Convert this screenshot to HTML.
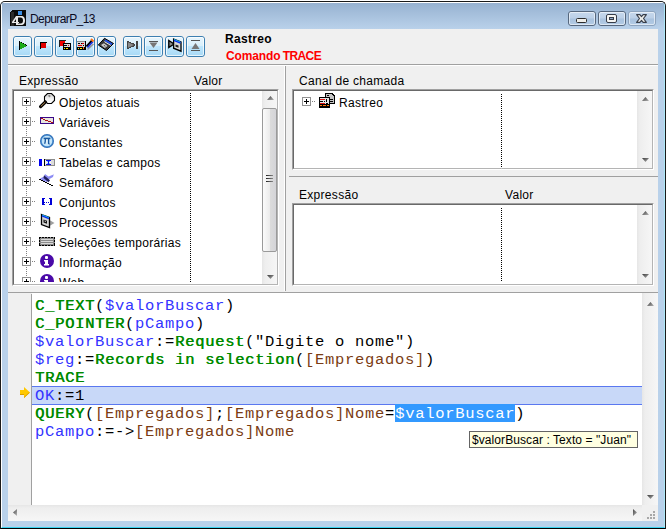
<!DOCTYPE html>
<html><head><meta charset="utf-8">
<style>
*{margin:0;padding:0;box-sizing:border-box}
html,body{width:666px;height:529px;overflow:hidden;background:#fff;font-family:"Liberation Sans",sans-serif;font-size:12px;color:#000}
.a{position:absolute}
svg{position:absolute;overflow:visible}
#win{position:absolute;left:0;top:1px;width:666px;height:528px;border:1px solid #1a1a1a;border-bottom-color:#000;border-radius:5px 5px 0 0;background:#b9d1ea;overflow:hidden}
#win:before{content:"";position:absolute;left:0;top:0;right:0;bottom:0;border-left:1px solid #fff;border-top:1px solid #fff;border-right:1px solid #aee8f8;border-bottom:1px solid #3ad3f0;border-radius:4px 4px 0 0}
#title{position:absolute;left:1px;top:1px;width:662px;height:26px;background:linear-gradient(#97b2d1,#b9d1ea)}
#client{position:absolute;left:8px;top:29px;width:650px;height:492px;background:#f0f0f0}
.tb{position:absolute;top:36px;width:19px;height:21px;border:1px solid #3c7fb1;border-radius:3px;background:linear-gradient(#e8f5fc 0%,#d9f0fc 45%,#bee6fd 50%,#a7d9f5 100%)}
.tb:before{content:"";position:absolute;left:0;top:0;right:0;bottom:0;border:1px solid rgba(255,255,255,.7);border-radius:2px}
.hdr,.row{position:absolute;font-size:12px;line-height:14px;letter-spacing:0.3px;white-space:nowrap}
.lb{position:absolute;background:#fff;border-top:1px solid #a0a0a0;border-left:1px solid #a0a0a0;border-right:1px solid #fff;border-bottom:1px solid #fff}
.lb>i{position:absolute;left:0;top:0;right:0;bottom:0;border-top:1px solid #696969;border-left:1px solid #696969;border-right:1px solid #b4b4b4;border-bottom:1px solid #b4b4b4}
.vs{position:absolute;background:linear-gradient(90deg,#e6e6e6 0,#eeeeee 3px,#f2f2f2 60%,#f6f6f6 100%)}
.hs{position:absolute;background:linear-gradient(#e6e6e6 0,#eeeeee 3px,#f2f2f2 60%,#f6f6f6 100%)}
.thumb{position:absolute;border:1px solid #9a9a9a;border-radius:2px;background:linear-gradient(90deg,#fbfbfb 0,#ececec 50%,#dcdcdc 51%,#d4d4d8 100%)}
.code{position:absolute;left:35px;font-family:"Liberation Mono",monospace;font-size:15.5px;letter-spacing:0.7px;line-height:18px;white-space:pre;height:18px}
.g{color:#008a00;text-shadow:0.55px 0 0 #008a00}
.b{color:#3333ff}
.r{color:#7a3c14}
.exp{position:absolute;width:9px;height:9px;border:1px solid #919191;background:#fff}
.exp:before{content:"";position:absolute;left:1px;top:3px;width:5px;height:1px;background:#000}
.exp:after{content:"";position:absolute;left:3px;top:1px;width:1px;height:5px;background:#000}
.dh{position:absolute;width:4px;height:1px;background:repeating-linear-gradient(90deg,#808080 0 1px,transparent 1px 2px)}
.dv{position:absolute;width:1px;background:repeating-linear-gradient(#808080 0 1px,transparent 1px 2px)}
.cold{position:absolute;width:1px;background:repeating-linear-gradient(#000 0 1px,transparent 1px 2px)}
.tbtn{position:absolute;top:11px;width:28px;height:15px;border:1px solid #56677d;border-radius:3px;background:linear-gradient(#c6d8ec 0,#bcd0e7 6px,#a9c2de 7px,#b3cbe5 100%)}
.tbtn:before{content:"";position:absolute;left:0;top:0;right:0;bottom:0;border:1px solid rgba(255,255,255,.55);border-radius:2px}
</style></head><body>
<div id="win"><div id="title"></div></div>
<!-- app icon -->
<svg style="left:10px;top:10px" width="16" height="16" viewBox="0 0 16 16" shape-rendering="crispEdges">
  <path d="M2 0H16V16H0V2Z" fill="#0a0a0a"/>
  <rect x="1" y="2" width="3" height="14" fill="#2a2a2a"/>
  <rect x="8" y="1" width="4" height="4" fill="#3a8ee6"/>
  <path d="M2 12L6 6H8V12H9V13H8V15H6V13H2Z M4 12H6V9Z" fill="#e8e8e8" fill-rule="evenodd" shape-rendering="auto"/>
  <path d="M8 6H11C14 6 15 8 15 10.5C15 13 14 15 11 15H8V13.5H10.5C12.3 13.5 13 12.5 13 10.5C13 8.5 12.3 7.5 10.5 7.5H8Z" fill="#e8e8e8" shape-rendering="auto"/>
</svg>
<div class="a" style="left:30px;top:12px;font-size:12px;line-height:14px;letter-spacing:-0.6px;color:#0a0a1e">DepurarP_13</div>
<!-- title buttons -->
<div class="tbtn" style="left:568px"></div>
<div class="tbtn" style="left:598px"></div>
<div class="tbtn" style="left:628px;border-color:#8da3bd"></div>
<div class="a" style="left:576px;top:18px;width:11px;height:5px;border:1px solid #2c2c2c;border-radius:1.5px;background:#eeeeea"></div>
<div class="a" style="left:606px;top:14px;width:11px;height:9px;border:1px solid #363c48;border-radius:2px;background:#f4f4f2"><div class="a" style="left:2px;top:2px;width:5px;height:3px;border:1px solid #363c48;background:#8ea6c4"></div></div>
<svg style="left:636px;top:14px" width="11" height="9" viewBox="0 0 11 9">
  <path d="M0.6 0.6H3.9L5.5 2.6L7.1 0.6H10.4L7.5 4.5L10.4 8.4H7.1L5.5 6.4L3.9 8.4H0.6L3.5 4.5Z" fill="#ecece8" stroke="#383e4a" stroke-width="1.1" stroke-linejoin="round"/>
</svg>


<div id="client"></div>
<div class="tb" style="left:13px"></div>
<div class="tb" style="left:34px"></div>
<div class="tb" style="left:55px"></div>
<div class="tb" style="left:76px"></div>
<div class="tb" style="left:97px"></div>
<div class="tb" style="left:123px"></div>
<div class="tb" style="left:144px"></div>
<div class="tb" style="left:165px"></div>
<div class="tb" style="left:186px"></div>
<!-- toolbar icons -->
<svg style="left:19px;top:41px" width="9" height="9" viewBox="0 0 9 9" shape-rendering="crispEdges">
  <path d="M1 1H2L8 4V5L2 8H1Z" fill="#1aaa1a"/>
  <rect x="0" y="0" width="1" height="9" fill="#000"/>
  <rect x="2" y="1" width="1" height="1" fill="#000"/><rect x="4" y="2" width="1" height="1" fill="#000"/><rect x="6" y="3" width="1" height="1" fill="#000"/><rect x="7" y="4" width="1" height="1" fill="#000"/>
</svg>
<svg style="left:40px;top:42px" width="7" height="7" viewBox="0 0 7 7" shape-rendering="crispEdges">
  <rect x="0" y="0" width="7" height="1" fill="#000"/><rect x="0" y="0" width="1" height="7" fill="#000"/>
  <rect x="1" y="1" width="5" height="5" fill="#e00000"/>
</svg>
<svg style="left:59px;top:40px" width="12" height="10" viewBox="0 0 12 10" shape-rendering="crispEdges">
  <rect x="0" y="0" width="7" height="1" fill="#222"/><rect x="0" y="0" width="1" height="7" fill="#222"/>
  <rect x="1" y="1" width="5" height="5" fill="#f00000"/>
  <rect x="4" y="3" width="8" height="7" fill="#000"/>
  <rect x="5" y="4" width="6" height="3" fill="#d8d8d8"/>
  <rect x="5" y="5" width="3" height="1" fill="#000"/><rect x="9" y="5" width="1" height="1" fill="#e00000"/>
  <rect x="5" y="8" width="1" height="1" fill="#ffe800"/><rect x="7" y="8" width="2" height="1" fill="#ffe800"/>
</svg>
<svg style="left:77px;top:38px" width="17" height="12" viewBox="0 0 17 12" shape-rendering="crispEdges">
  <rect x="0" y="3" width="9" height="9" fill="#000"/>
  <rect x="0" y="3" width="8" height="1" fill="#8a8a8a"/>
  <rect x="0" y="4" width="8" height="5" fill="#d8d8d8"/>
  <rect x="1" y="5" width="2" height="1" fill="#000"/><rect x="4" y="5" width="1" height="1" fill="#000"/><rect x="5" y="5" width="2" height="1" fill="#e00000"/>
  <rect x="1" y="7" width="4" height="1" fill="#e00000"/><rect x="6" y="7" width="1" height="1" fill="#000"/>
  <rect x="1" y="10" width="1" height="1" fill="#ffe800"/><rect x="3" y="10" width="2" height="1" fill="#ffe800"/>
  <rect x="6" y="9" width="1" height="2" fill="#ff7010"/>
  <path d="M9.5 8.5L15 2.5" stroke="#000" stroke-width="2" shape-rendering="auto"/>
  <path d="M10.5 9.5L16 3.5" stroke="#1a2ee0" stroke-width="1.8" shape-rendering="auto"/>
  <path d="M14 1L16.5 3.5" stroke="#ff7010" stroke-width="2" shape-rendering="auto"/>
  <path d="M10.5 11.5L16.5 6" stroke="#909090" stroke-width="1.3" shape-rendering="auto"/>
</svg>
<svg style="left:98px;top:38px" width="16" height="13" viewBox="0 0 16 13">
  <path d="M6.5 0.3L15.5 5.5L8.5 12.5L0.3 7Z" fill="#3a3a3a" stroke="#000" stroke-width="1"/>
  <path d="M7 2.2L14 6.3" stroke="#1e50f0" stroke-width="1.8"/>
  <path d="M6.4 3.6L12.8 7.4" stroke="#fff" stroke-width="0.9"/>
  <path d="M3 7L6 5.2L9.5 8L6.8 10Z" fill="#d0d0d0"/>
  <path d="M5.8 7.3L7.4 8.3" stroke="#444" stroke-width="1"/>
</svg>
<svg style="left:127px;top:41px" width="12" height="8" viewBox="0 0 12 8" shape-rendering="crispEdges">
  <path d="M0 0H1L8 3V5L1 8H0Z" fill="#444"/>
  <path d="M1 1.2L7 4L1 6.8Z" fill="#8a8a8a" shape-rendering="auto"/>
  <rect x="9" y="0" width="2" height="8" fill="#444"/>
</svg>
<svg style="left:149px;top:41px" width="9" height="10" viewBox="0 0 9 10" shape-rendering="crispEdges">
  <rect x="0" y="0" width="9" height="1" fill="#555"/>
  <path d="M0.5 1.5H8.5L4.5 7Z" fill="#777" shape-rendering="auto"/>
  <rect x="0" y="9" width="9" height="1" fill="#555"/>
</svg>
<svg style="left:168px;top:38px" width="14" height="14" viewBox="0 0 14 14">
  <path d="M0.8 2.5V9.5L6 6Z" fill="#8a8a8a" stroke="#000" stroke-width="1.4"/>
  <path d="M5.6 1L13 4V13.2L5.6 10.2Z" fill="#d8d8d8" stroke="#000" stroke-width="1.3"/>
  <path d="M6 2.2L12.5 4.8" stroke="#0a2af0" stroke-width="1.8"/>
  <path d="M6 1.4L12.5 4" stroke="#20d0f0" stroke-width="0.8"/>
  <path d="M7.5 6.5L10.5 7.5V9.8L7.5 8.8Z" fill="#222"/>
</svg>
<svg style="left:191px;top:40px" width="9" height="11" viewBox="0 0 9 11" shape-rendering="crispEdges">
  <rect x="0" y="0" width="9" height="1" fill="#555"/>
  <path d="M4.5 3L8.5 9H0.5Z" fill="#777" shape-rendering="auto"/>
  <rect x="0" y="10" width="9" height="1" fill="#555"/>
</svg>

<div class="a" style="left:225px;top:32px;font-weight:bold;font-size:12px;line-height:14px;letter-spacing:0.3px">Rastreo</div>
<div class="a" style="left:226px;top:49px;font-weight:bold;font-size:12px;line-height:14px;letter-spacing:-0.12px;color:#f00">Comando <span style="letter-spacing:-0.6px;margin-left:-1px">TRACE</span></div>
<div class="a" style="left:8px;top:64px;width:650px;height:1px;background:#a0a0a0"></div>
<div class="a" style="left:8px;top:65px;width:650px;height:1px;background:#fff"></div>
<div class="hdr" style="left:19px;top:74px">Expressão</div>
<div class="hdr" style="left:194px;top:74px">Valor</div>
<div class="lb" style="left:12px;top:89px;width:267px;height:197px"><i></i></div>
<div class="a" style="left:0;top:91px;width:262px;height:191px;overflow:hidden"><div class="a" style="left:0;top:-91px;width:262px;height:400px"><div class="dv" style="left:26px;top:107px;height:175px"></div>
<div class="exp" style="left:22px;top:97px"></div>
<div class="dh" style="left:32px;top:101px"></div>
<div class="row" style="left:59px;top:96px">Objetos atuais</div>
<div class="exp" style="left:22px;top:117px"></div>
<div class="dh" style="left:32px;top:121px"></div>
<div class="row" style="left:59px;top:116px">Variáveis</div>
<div class="exp" style="left:22px;top:137px"></div>
<div class="dh" style="left:32px;top:141px"></div>
<div class="row" style="left:59px;top:136px">Constantes</div>
<div class="exp" style="left:22px;top:157px"></div>
<div class="dh" style="left:32px;top:161px"></div>
<div class="row" style="left:59px;top:156px">Tabelas e campos</div>
<div class="exp" style="left:22px;top:177px"></div>
<div class="dh" style="left:32px;top:181px"></div>
<div class="row" style="left:59px;top:176px">Semáforo</div>
<div class="exp" style="left:22px;top:197px"></div>
<div class="dh" style="left:32px;top:201px"></div>
<div class="row" style="left:59px;top:196px">Conjuntos</div>
<div class="exp" style="left:22px;top:217px"></div>
<div class="dh" style="left:32px;top:221px"></div>
<div class="row" style="left:59px;top:216px">Processos</div>
<div class="exp" style="left:22px;top:237px"></div>
<div class="dh" style="left:32px;top:241px"></div>
<div class="row" style="left:59px;top:236px">Seleções temporárias</div>
<div class="exp" style="left:22px;top:257px"></div>
<div class="dh" style="left:32px;top:261px"></div>
<div class="row" style="left:59px;top:256px">Informação</div>
<div class="exp" style="left:22px;top:277px"></div>
<div class="dh" style="left:32px;top:281px"></div>
<div class="row" style="left:59px;top:276px">Web</div><!-- magnifier -->
<svg style="left:39px;top:93px" width="16" height="16" viewBox="0 0 16 16">
  <defs><linearGradient id="lg1" x1="0" y1="0" x2="0" y2="1"><stop offset="0" stop-color="#c8c8c8"/><stop offset="0.55" stop-color="#f4f4f4"/><stop offset="1" stop-color="#fff"/></linearGradient></defs>
  <path d="M8.5 0.5H12.5L15.5 3.5V7.5L12.5 10.5H8.5L5.5 7.5V3.5Z" fill="url(#lg1)" stroke="#000" stroke-width="1.1"/>
  <path d="M9 3L11 2.5M10 4L11.5 3" stroke="#666" stroke-width="0.8"/>
  <path d="M1.6 13.6L6.4 9" stroke="#000" stroke-width="3.2" stroke-linecap="round"/>
  <path d="M1.8 13.4L6.2 9.2" stroke="#c09050" stroke-width="1"/>
</svg>
<!-- variaveis -->
<svg style="left:40px;top:117px" width="14" height="7" viewBox="0 0 14 7" shape-rendering="crispEdges">
  <rect x="0" y="0" width="14" height="7" fill="#3a0888"/>
  <rect x="1" y="1" width="12" height="5" fill="#e6e6de"/>
  <rect x="1" y="1" width="2" height="1" fill="#b01010"/><rect x="3" y="2" width="2" height="1" fill="#b01010"/>
  <rect x="5" y="3" width="3" height="1" fill="#b01010"/><rect x="8" y="4" width="3" height="1" fill="#b01010"/>
  <rect x="11" y="5" width="2" height="1" fill="#b01010"/>
</svg>
<!-- pi -->
<svg style="left:40px;top:134px" width="14" height="14" viewBox="0 0 14 14">
  <defs><radialGradient id="rg1" cx="0.5" cy="0.5" r="0.5"><stop offset="0" stop-color="#e8f6fe"/><stop offset="0.7" stop-color="#bfe2f8"/><stop offset="0.8" stop-color="#4a8ed0"/><stop offset="1" stop-color="#1e5eaa"/></radialGradient></defs>
  <circle cx="7" cy="7" r="7" fill="url(#rg1)"/>
  <path d="M3.6 4.4H10.4" stroke="#1a5aa0" stroke-width="1.5"/>
  <path d="M5.4 4.4C5.4 6.5 5.2 8.5 4.6 9.8M8.6 4.4V9.2C8.6 9.7 9 9.9 9.6 9.6" stroke="#1a5aa0" stroke-width="1.4" fill="none"/>
</svg>
<!-- tabelas -->
<svg style="left:39px;top:159px" width="16" height="7" viewBox="0 0 16 7" shape-rendering="crispEdges">
  <rect x="0" y="0" width="3" height="7" fill="#0000f0"/>
  <rect x="5" y="0" width="11" height="7" fill="#8c8c8c"/>
  <rect x="5" y="0" width="1" height="7" fill="#000"/>
  <rect x="6" y="1" width="9" height="5" fill="#f0f0f0"/>
  <rect x="12" y="1" width="3" height="5" fill="#dcdcdc"/>
  <rect x="7" y="1" width="2" height="1" fill="#0a0ae8"/><rect x="10" y="1" width="2" height="1" fill="#0a0ae8"/>
  <rect x="7" y="5" width="2" height="1" fill="#0a0ae8"/><rect x="10" y="5" width="2" height="1" fill="#0a0ae8"/>
  <rect x="9" y="1" width="1" height="5" fill="#0a0ae8"/>
  <rect x="8" y="2" width="1" height="1" fill="#60c0ff"/><rect x="10" y="2" width="1" height="1" fill="#60c0ff"/>
  <rect x="8" y="4" width="1" height="1" fill="#60c0ff"/><rect x="10" y="4" width="1" height="1" fill="#60c0ff"/>
</svg>
<!-- semaforo -->
<svg style="left:39px;top:173px" width="16" height="13" viewBox="0 0 16 13">
  <path d="M1 5.5L5 3.5L6 1L9.5 3.5L14.5 1.5L15 0.5L14 4L9.5 6.5L8 9L4 8Z" fill="#8c8cf4"/>
  <path d="M5 2.2L11 7.2L9.5 9.2L4.5 5Z" fill="#1e1e5a"/>
  <g shape-rendering="crispEdges" fill="#000">
  <rect x="0" y="6" width="2" height="1"/><rect x="2" y="7" width="2" height="1"/><rect x="4" y="8" width="2" height="1"/>
  <rect x="6" y="9" width="2" height="1"/><rect x="8" y="10" width="2" height="1"/><rect x="10" y="11" width="2" height="1"/><rect x="12" y="12" width="2" height="1"/>
  </g>
</svg>
<!-- conjuntos -->
<svg style="left:42px;top:198px" width="10" height="7" viewBox="0 0 10 7" shape-rendering="crispEdges" fill="#0000d8">
  <rect x="0" y="0" width="2" height="7"/><rect x="2" y="0" width="1" height="1"/><rect x="2" y="6" width="1" height="1"/>
  <rect x="8" y="0" width="2" height="7"/><rect x="7" y="0" width="1" height="1"/><rect x="7" y="6" width="1" height="1"/>
  <rect x="2" y="4" width="1" height="1"/><rect x="4" y="4" width="1" height="1"/><rect x="6" y="4" width="1" height="1"/>
</svg>
<!-- processos -->
<svg style="left:40px;top:213px" width="16" height="16" viewBox="0 0 16 16">
  <path d="M9.5 7L14.5 10L9.5 13Z" fill="#a0a0a0"/>
  <path d="M1.5 1.5L9.5 4.5V14.5L1.5 11.5Z" fill="#d4d4d4" stroke="#000" stroke-width="1.3"/>
  <path d="M2 2.6L9 5.3" stroke="#0a2af0" stroke-width="1.8"/>
  <path d="M2 1.8L9 4.5" stroke="#20d0f0" stroke-width="0.8"/>
  <path d="M3.5 6.5L7 7.8V10.8L3.5 9.5Z" fill="#111"/>
  <path d="M4.5 8L6 8.6" stroke="#ddd" stroke-width="0.8"/>
</svg>
<!-- selecoes -->
<svg style="left:39px;top:237px" width="16" height="9" viewBox="0 0 16 9" shape-rendering="crispEdges">
  <rect x="0" y="0" width="16" height="9" fill="#8a8a8a"/>
  <rect x="2" y="2" width="12" height="1" fill="#d8d8d8"/><rect x="2" y="4" width="12" height="1" fill="#d8d8d8"/><rect x="2" y="6" width="12" height="1" fill="#d8d8d8"/>
  <path d="M0 0.5H16M0 8.5H16" stroke="#000" stroke-dasharray="2 1"/>
  <path d="M0.5 0V9M15.5 0V9" stroke="#000" stroke-dasharray="2 1"/>
</svg>
<!-- info -->
<svg style="left:40px;top:254px" width="14" height="14" viewBox="0 0 14 14">
  <circle cx="7" cy="7" r="7" fill="#4a0aa8"/>
  <rect x="5" y="2" width="3" height="3" rx="1" fill="#fff"/>
  <path d="M4 6H8V10H9V11.5H4V10H5V7.5H4Z" fill="#fff"/>
</svg>
<!-- web -->
<svg style="left:40px;top:274px" width="14" height="14" viewBox="0 0 14 14">
  <circle cx="7" cy="7" r="7" fill="#4a0aa8"/>
  <rect x="5" y="2" width="3" height="3" rx="1" fill="#fff"/>
  <path d="M4 6H8V10H9V11.5H4V10H5V7.5H4Z" fill="#fff"/>
</svg>

</div></div>
<div class="cold" style="left:190px;top:93px;height:189px"></div>
<div class="vs" style="left:262px;top:91px;width:15px;height:193px"></div>
<svg style="left:267px;top:96px" width="7" height="4" viewBox="0 0 7 4"><defs><linearGradient id="au267_96" x1="0" y1="0" x2="1" y2="1"><stop offset="0" stop-color="#3a3a3a"/><stop offset="1" stop-color="#b4b4b4"/></linearGradient></defs><path d="M0 4L3.5 0L7 4Z" fill="url(#au267_96)"/></svg>
<div class="thumb" style="left:262px;top:108px;width:15px;height:144px"></div>
<div class="a" style="left:266px;top:175px;width:7px;height:1px;background:linear-gradient(90deg,#222,#888)"></div>
<div class="a" style="left:266px;top:178px;width:7px;height:1px;background:linear-gradient(90deg,#222,#888)"></div>
<div class="a" style="left:266px;top:181px;width:7px;height:1px;background:linear-gradient(90deg,#222,#888)"></div>
<svg style="left:267px;top:275px" width="7" height="4" viewBox="0 0 7 4"><defs><linearGradient id="ad267_275" x1="0" y1="0" x2="1" y2="1"><stop offset="0" stop-color="#3a3a3a"/><stop offset="1" stop-color="#b4b4b4"/></linearGradient></defs><path d="M0 0L7 0L3.5 4Z" fill="url(#ad267_275)"/></svg>
<div class="a" style="left:284px;top:66px;width:1px;height:225px;background:#fff"></div>
<div class="a" style="left:285px;top:66px;width:1px;height:225px;background:#a0a0a0"></div>
<div class="hdr" style="left:299px;top:74px">Canal de chamada</div>
<div class="lb" style="left:292px;top:89px;width:362px;height:81px"><i></i></div>
<div class="cold" style="left:501px;top:94px;height:73px"></div>
<div class="vs" style="left:637px;top:91px;width:15px;height:77px"></div>
<svg style="left:642px;top:97px" width="7" height="4" viewBox="0 0 7 4"><defs><linearGradient id="au642_97" x1="0" y1="0" x2="1" y2="1"><stop offset="0" stop-color="#3a3a3a"/><stop offset="1" stop-color="#b4b4b4"/></linearGradient></defs><path d="M0 4L3.5 0L7 4Z" fill="url(#au642_97)"/></svg>
<svg style="left:642px;top:158px" width="7" height="4" viewBox="0 0 7 4"><defs><linearGradient id="ad642_158" x1="0" y1="0" x2="1" y2="1"><stop offset="0" stop-color="#3a3a3a"/><stop offset="1" stop-color="#b4b4b4"/></linearGradient></defs><path d="M0 0L7 0L3.5 4Z" fill="url(#ad642_158)"/></svg>
<div class="exp" style="left:302px;top:97px"></div>
<div class="dh" style="left:312px;top:101px"></div>
<svg style="left:319px;top:93px" width="16" height="15" viewBox="0 0 16 15" shape-rendering="crispEdges">
  <path d="M6 0H13L16 3V11H6Z" fill="#000"/>
  <path d="M7 1H12L15 4V10H7Z" fill="#c4c4c4"/>
  <rect x="8" y="2" width="2" height="1" fill="#000"/>
  <rect x="11" y="6" width="3" height="1" fill="#000"/><rect x="11" y="8" width="3" height="1" fill="#000"/>
  <rect x="0" y="4" width="11" height="11" fill="#000"/>
  <rect x="1" y="5" width="9" height="6" fill="#e4e4e4"/>
  <rect x="1" y="6" width="5" height="1" fill="#e01010"/><rect x="1" y="10" width="5" height="1" fill="#e01010"/>
  <rect x="1" y="8" width="3" height="1" fill="#000"/><rect x="5" y="8" width="1" height="1" fill="#000"/>
  <rect x="7" y="6" width="1" height="3" fill="#000"/><rect x="7" y="10" width="2" height="1" fill="#000"/>
  <rect x="1" y="12" width="2" height="1" fill="#ff7a10"/><rect x="4" y="12" width="3" height="1" fill="#ff7a10"/><rect x="8" y="12" width="2" height="1" fill="#ff7a10"/>
</svg>

<div class="row" style="left:339px;top:96px">Rastreo</div>
<div class="a" style="left:289px;top:176px;width:369px;height:1px;background:#a0a0a0"></div>
<div class="hdr" style="left:299px;top:188px">Expressão</div>
<div class="hdr" style="left:505px;top:188px">Valor</div>
<div class="lb" style="left:292px;top:203px;width:362px;height:83px"><i></i></div>
<div class="cold" style="left:501px;top:208px;height:74px"></div>
<div class="vs" style="left:637px;top:205px;width:15px;height:79px"></div>
<svg style="left:642px;top:211px" width="7" height="4" viewBox="0 0 7 4"><defs><linearGradient id="au642_211" x1="0" y1="0" x2="1" y2="1"><stop offset="0" stop-color="#3a3a3a"/><stop offset="1" stop-color="#b4b4b4"/></linearGradient></defs><path d="M0 4L3.5 0L7 4Z" fill="url(#au642_211)"/></svg>
<svg style="left:642px;top:274px" width="7" height="4" viewBox="0 0 7 4"><defs><linearGradient id="ad642_274" x1="0" y1="0" x2="1" y2="1"><stop offset="0" stop-color="#3a3a3a"/><stop offset="1" stop-color="#b4b4b4"/></linearGradient></defs><path d="M0 0L7 0L3.5 4Z" fill="url(#ad642_274)"/></svg>
<div class="a" style="left:8px;top:292px;width:650px;height:1px;background:#a0a0a0"></div>
<div class="a" style="left:31px;top:294px;width:1px;height:211px;background:#a0a0a0"></div>
<div class="a" style="left:32px;top:293px;width:610px;height:212px;background:#fff"></div>
<div class="a" style="left:32px;top:386px;width:610px;height:19px;background:#c8d8f8;border-top:1px solid #5a78f0;border-bottom:1px solid #5a78f0"></div>
<div class="a" style="left:395px;top:404px;width:120px;height:18px;background:#3399ff"></div>
<div class="vs" style="left:642px;top:293px;width:16px;height:212px"></div>
<svg style="left:647px;top:302px" width="7" height="4" viewBox="0 0 7 4"><defs><linearGradient id="au647_302" x1="0" y1="0" x2="1" y2="1"><stop offset="0" stop-color="#3a3a3a"/><stop offset="1" stop-color="#b4b4b4"/></linearGradient></defs><path d="M0 4L3.5 0L7 4Z" fill="url(#au647_302)"/></svg>
<svg style="left:647px;top:495px" width="7" height="4" viewBox="0 0 7 4"><defs><linearGradient id="ad647_495" x1="0" y1="0" x2="1" y2="1"><stop offset="0" stop-color="#3a3a3a"/><stop offset="1" stop-color="#b4b4b4"/></linearGradient></defs><path d="M0 0L7 0L3.5 4Z" fill="url(#ad647_495)"/></svg>
<div class="hs" style="left:8px;top:505px;width:634px;height:16px"></div>
<svg style="left:13px;top:509px" width="4" height="7" viewBox="0 0 4 7"><defs><linearGradient id="al13_509" x1="0" y1="0" x2="1" y2="1"><stop offset="0" stop-color="#444"/><stop offset="1" stop-color="#bbb"/></linearGradient></defs><path d="M4 0V7L0 3.5Z" fill="url(#al13_509)"/></svg>
<svg style="left:633px;top:509px" width="4" height="7" viewBox="0 0 4 7"><defs><linearGradient id="ar633_509" x1="0" y1="0" x2="1" y2="1"><stop offset="0" stop-color="#444"/><stop offset="1" stop-color="#bbb"/></linearGradient></defs><path d="M0 0V7L4 3.5Z" fill="url(#ar633_509)"/></svg>
<div class="a" style="left:653px;top:511px;width:2px;height:2px;background:#a8a8a8"></div>
<div class="a" style="left:650px;top:514px;width:2px;height:2px;background:#a8a8a8"></div>
<div class="a" style="left:653px;top:514px;width:2px;height:2px;background:#a8a8a8"></div>
<div class="a" style="left:647px;top:517px;width:2px;height:2px;background:#a8a8a8"></div>
<div class="a" style="left:650px;top:517px;width:2px;height:2px;background:#a8a8a8"></div>
<div class="a" style="left:653px;top:517px;width:2px;height:2px;background:#a8a8a8"></div>
<div class="code" style="top:297px"><span class="g">C_TEXT</span>(<span class="b">$valorBuscar</span>)</div>
<div class="code" style="top:315px"><span class="g">C_POINTER</span>(<span class="b">pCampo</span>)</div>
<div class="code" style="top:333px"><span class="b">$valorBuscar</span>:=<span class="g">Request</span>("Digite o nome")</div>
<div class="code" style="top:351px"><span class="b">$reg</span>:=<span class="g">Records in selection</span>(<span class="r">[Empregados]</span>)</div>
<div class="code" style="top:369px"><span class="g">TRACE</span></div>
<div class="code" style="top:387px"><span class="b">OK</span>:=1</div>
<div class="code" style="top:405px"><span class="g">QUERY</span>(<span class="r">[Empregados]</span>;<span class="r">[Empregados]Nome</span>=<span style="color:#fff">$valorBuscar</span>)</div>
<div class="code" style="top:423px"><span class="b">pCampo</span>:=-&gt;<span class="r">[Empregados]Nome</span></div>
<svg style="left:20px;top:387px" width="11" height="11" viewBox="0 0 11 11"><path d="M0 3H4V0L10 5.5L4 11V8H0Z" fill="#ffc800"/><path d="M0 7H4V8H0Z M4 10L9 5.5L10 5.5L4 11Z" fill="#d89c00"/></svg>
<div class="a" style="left:469px;top:431px;width:169px;height:17px;background:#ffffe1;border:1px solid #646464"></div>
<div class="a" style="left:472px;top:433px;font-size:12px;line-height:14px;letter-spacing:0.08px;white-space:nowrap">$valorBuscar : Texto = "Juan"</div>
</body></html>
